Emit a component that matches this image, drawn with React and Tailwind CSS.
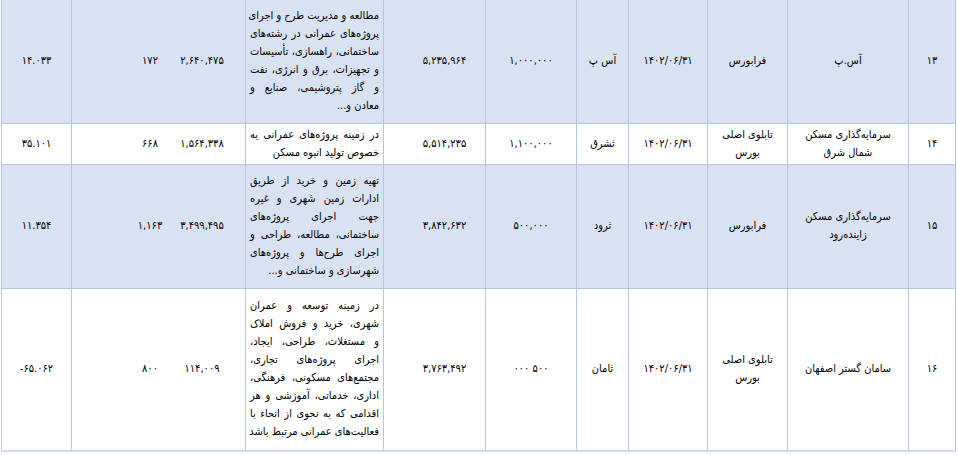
import React from "react";

const rows = [
  {
    id: "۱۳",
    name: ["آس.پ"],
    market: ["فرابورس"],
    date: "۱۴۰۲/۰۶/۳۱",
    symbol: "آس پ",
    capital: "۱,۰۰۰,۰۰۰",
    assets: "۵,۲۳۵,۹۶۴",
    desc: [
      "مطالعه و مدیریت طرح و اجرای",
      "پروژه‌های عمرانی در رشته‌های",
      "ساختمانی، راهسازی، تأسیسات",
      "و تجهیزات، برق و انرژی، نفت",
      "و گاز پتروشیمی، صنایع و",
      "معادن و...",
    ],
    equity: "۲,۶۴۰,۴۷۵",
    count: "۱۷۲",
    pct: "۱۴.۰۳۳",
    shaded: true,
    h: "h-[123px]",
  },
  {
    id: "۱۴",
    name: ["سرمایه‌گذاری مسکن", "شمال شرق"],
    market: ["تابلوی اصلی", "بورس"],
    date: "۱۴۰۲/۰۶/۳۱",
    symbol: "ثشرق",
    capital: "۱,۱۰۰,۰۰۰",
    assets: "۵,۵۱۴,۲۳۵",
    desc: ["در زمینه پروژه‌های عمرانی به", "خصوص تولید انبوه مسکن"],
    equity: "۱,۵۶۴,۳۳۸",
    count: "۶۶۸",
    pct: "۳۵.۱۰۱",
    shaded: false,
    h: "h-[41px]",
  },
  {
    id: "۱۵",
    name: ["سرمایه‌گذاری مسکن", "زاینده‌رود"],
    market: ["فرابورس"],
    date: "۱۴۰۲/۰۶/۳۱",
    symbol: "ثرود",
    capital: "۵۰۰,۰۰۰",
    assets: "۳,۸۴۲,۶۳۲",
    desc: [
      "تهیه زمین و خرید از طریق",
      "ادارات زمین شهری و غیره",
      "جهت اجرای پروژه‌های",
      "ساختمانی، مطالعه، طراحی و",
      "اجرای طرح‌ها و پروژه‌های",
      "شهرسازی و ساختمانی و...",
    ],
    equity: "۳,۴۹۹,۴۹۵",
    count: "۱,۱۶۳",
    pct: "۱۱.۳۵۴",
    shaded: true,
    h: "h-[124px]",
  },
  {
    id: "۱۶",
    name: ["سامان گستر اصفهان"],
    market: ["تابلوی اصلی", "بورس"],
    date: "۱۴۰۲/۰۶/۳۱",
    symbol: "ثامان",
    capital: "۰۰۰ ۵۰۰",
    assets: "۳,۷۶۳,۴۹۲",
    desc: [
      "در زمینه توسعه و عمران",
      "شهری، خرید و فروش املاک",
      "و مستغلات، طراحی، ایجاد،",
      "اجرای پروژه‌های تجاری،",
      "مجتمع‌های مسکونی، فرهنگی،",
      "اداری، خدماتی، آموزشی و هر",
      "اقدامی که به نحوی از انحاء با",
      "فعالیت‌های عمرانی مرتبط باشد",
    ],
    equity: "۱۱۴,۰۰۹",
    count: "۸۰۰",
    pct: "-۶۵.۰۶۲",
    shaded: false,
    h: "h-[163px]",
  },
];

const cell = "border border-[#b4c6e7] align-middle text-center p-0";

const Lines = ({ items }) => (
  <>
    {items.map((t, i) => (
      <div key={i} className="whitespace-nowrap">
        {t}
      </div>
    ))}
  </>
);

const Num = ({ children }) => (
  <span dir="ltr" className="whitespace-nowrap">
    {children}
  </span>
);

export default function App() {
  return (
    <div className="bg-white w-[958px] h-[455px] overflow-hidden">
      <table
        dir="rtl"
        className="ml-px table-fixed border-collapse w-[954px] text-[11px] leading-[18px] text-black"
        style={{ fontFamily: '"DejaVu Sans Condensed", "DejaVu Sans", sans-serif' }}
      >
        <colgroup>
          <col className="w-[47px]" />
          <col className="w-[121px]" />
          <col className="w-[80px]" />
          <col className="w-[79px]" />
          <col className="w-[52px]" />
          <col className="w-[91px]" />
          <col className="w-[102px]" />
          <col className="w-[138px]" />
          <col className="w-[174px]" />
          <col className="w-[70px]" />
        </colgroup>
        <tbody>
          {rows.map((r, idx) => (
            <tr
              key={r.id}
              className={`${r.h} ${r.shaded ? "bg-[#d9e2f3]" : "bg-white"} ${
                idx === 0 ? "[&>td]:border-t-0" : ""
              } ${idx === rows.length - 1 ? "[&>td]:border-b-2 [&>td]:border-b-[#d3dcef]" : ""}`}
            >
              <td className={cell}>
                <Num>{r.id}</Num>
              </td>
              <td className={cell}>
                <Lines items={r.name} />
              </td>
              <td className={cell}>
                <Lines items={r.market} />
              </td>
              <td className={cell}>
                <Num>{r.date}</Num>
              </td>
              <td className={cell}>{r.symbol}</td>
              <td className={cell}>
                <Num>{r.capital}</Num>
              </td>
              <td className={`${cell} pl-[20px]`}>
                <Num>{r.assets}</Num>
              </td>
              <td className={`${cell} px-[4px]`}>
                {r.desc.map((t, i) => (
                  <div
                    key={i}
                    className={`whitespace-nowrap text-right ${
                      i < r.desc.length - 1 ? "[text-align-last:justify]" : ""
                    }`}
                  >
                    {t}
                  </div>
                ))}
              </td>
              <td className={cell}>
                <div dir="ltr" className="flex pl-[50px]">
                  <div className="w-[56px] text-center">
                    <Num>{r.count}</Num>
                  </div>
                  <div className="w-[48px] text-center">
                    <Num>{r.equity}</Num>
                  </div>
                </div>
              </td>
              <td className={cell}>
                <Num>{r.pct}</Num>
              </td>
            </tr>
          ))}
        </tbody>
      </table>
    </div>
  );
}
